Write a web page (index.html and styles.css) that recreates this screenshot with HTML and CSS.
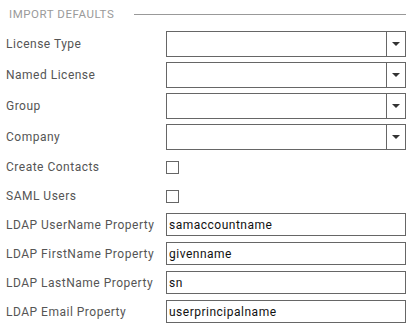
FILE: index.html
```html
<!DOCTYPE html>
<html lang="en">
<head>
    <meta charset="UTF-8">
    <title>Import Defaults</title>
    <link rel="stylesheet" href="styles.css">
</head>
<body>
    <div class="import-defaults">
        <div class="section-title">
            <span>IMPORT DEFAULTS</span>
            <div class="section-line"></div>
        </div>

        <!-- 下拉框 -->
        <div class="form-row select-row">
            <label>License Type</label>
            <div class="combo">
                <div class="combo-value"></div>
                <div class="combo-btn"><span class="caret"></span></div>
            </div>
        </div>
        <div class="form-row select-row">
            <label>Named License</label>
            <div class="combo">
                <div class="combo-value"></div>
                <div class="combo-btn"><span class="caret"></span></div>
            </div>
        </div>
        <div class="form-row select-row">
            <label>Group</label>
            <div class="combo">
                <div class="combo-value"></div>
                <div class="combo-btn"><span class="caret"></span></div>
            </div>
        </div>
        <div class="form-row select-row">
            <label>Company</label>
            <div class="combo">
                <div class="combo-value"></div>
                <div class="combo-btn"><span class="caret"></span></div>
            </div>
        </div>

        <!-- 复选框 -->
        <div class="form-row check-row">
            <label>Create Contacts</label>
            <span class="check-box"></span>
        </div>
        <div class="form-row check-row">
            <label>SAML Users</label>
            <span class="check-box"></span>
        </div>

        <!-- 文本框 -->
        <div class="form-row input-row">
            <label>LDAP UserName Property</label>
            <input type="text" class="text-input" value="samaccountname">
        </div>
        <div class="form-row input-row">
            <label>LDAP FirstName Property</label>
            <input type="text" class="text-input" value="givenname">
        </div>
        <div class="form-row input-row">
            <label>LDAP LastName Property</label>
            <input type="text" class="text-input" value="sn">
        </div>
        <div class="form-row input-row">
            <label>LDAP Email Property</label>
            <input type="text" class="text-input" value="userprincipalname">
        </div>
    </div>
</body>
</html>
```

FILE: styles.css
```css
* {
    margin: 0;
    padding: 0;
    box-sizing: border-box;
}

body {
    width: 100%;
    background-color: #fff;
    font-family: Roboto, "Liberation Sans", sans-serif;
    font-size: 12px;
    letter-spacing: 0.5px;
    color: #555;
}

.import-defaults {
    width: 412px;
    padding: 0 6px 0 6px;
}

.section-title {
    display: flex;
    align-items: center;
    height: 28px;
    margin-bottom: 3px;
    padding-left: 3px;
}

.section-title span {
    color: #9a9a9a;
    font-size: 11.5px;
    letter-spacing: 0.55px;
}

.section-line {
    flex: 1;
    height: 1px;
    margin-left: 20px;
    background-color: #999;
}

.form-row {
    display: flex;
    align-items: center;
}

.form-row label {
    width: 160px;
}

.select-row {
    height: 26px;
    margin-bottom: 5px;
}

.check-row {
    height: 24px;
    margin-bottom: 5px;
}

.input-row {
    height: 23px;
    margin-bottom: 6px;
}

.combo {
    display: flex;
    width: 240px;
    height: 26px;
    border: 1px solid #666;
    background-color: #fff;
}

.combo-value {
    flex: 1;
}

.combo-btn {
    width: 19px;
    border-left: 1px solid #666;
    display: flex;
    align-items: center;
    justify-content: center;
}

.caret {
    width: 0;
    height: 0;
    border-left: 4px solid transparent;
    border-right: 4px solid transparent;
    border-top: 4px solid #333;
}

.check-box {
    width: 13px;
    height: 13px;
    border: 1px solid #666;
    background-color: #fff;
}

.text-input {
    width: 240px;
    height: 23px;
    border: 1px solid #666;
    padding: 0 2px;
    font-family: Roboto, "Liberation Sans", sans-serif;
    font-size: 12px;
    letter-spacing: 0.5px;
    color: #111;
    outline: none;
}
```
